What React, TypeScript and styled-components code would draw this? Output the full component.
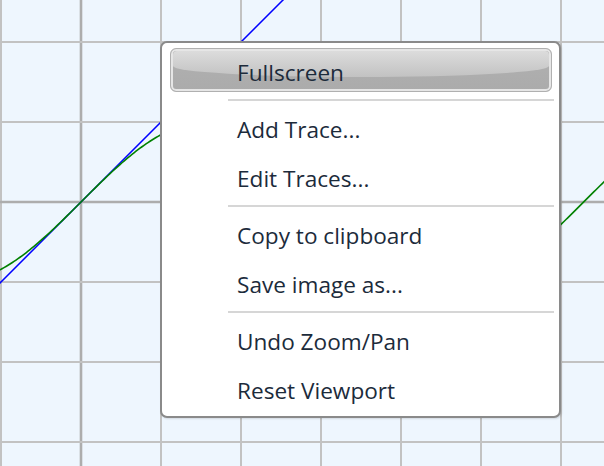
import * as React from 'react';
import styled, { createGlobalStyle } from 'styled-components';

const W = 604;
const H = 466;
const OX = 81;
const OY = 202;
const UNIT = 80;

const GlobalStyle = createGlobalStyle`
  html, body {
    margin: 0;
    padding: 0;
    background: #eef6fe;
  }
`;

function buildPath(fn: (x: number) => number) {
  const pts: string[] = [];
  for (let px = -2; px <= W + 2; px += 2) {
    const x = (px - OX) / UNIT;
    const py = OY - fn(x) * UNIT;
    pts.push(`${pts.length === 0 ? 'M' : 'L'}${px} ${py.toFixed(2)}`);
  }
  return pts.join(' ');
}

function Plot() {
  const xs: number[] = [];
  for (let x = OX - UNIT; x < W; x += UNIT) xs.push(x);
  const ys: number[] = [];
  for (let y = OY - 2 * UNIT; y < H; y += UNIT) ys.push(y);

  return (
    <Svg width={W} height={H} viewBox={`0 0 ${W} ${H}`}>
      {xs.map((x) => (
        <line
          key={`v${x}`}
          x1={x}
          x2={x}
          y1={0}
          y2={H}
          stroke={x === OX ? '#adadad' : '#c2c2c2'}
          strokeWidth={x === OX ? 2.6 : 2}
        />
      ))}
      {ys.map((y) => (
        <line
          key={`h${y}`}
          x1={0}
          x2={W}
          y1={y}
          y2={y}
          stroke={y === OY ? '#adadad' : '#c2c2c2'}
          strokeWidth={y === OY ? 2.6 : 2}
        />
      ))}
      <path d={buildPath((x) => x)} fill="none" stroke="#0000ff" strokeWidth={1.6} />
      <path d={buildPath(Math.sin)} fill="none" stroke="#008000" strokeWidth={1.6} />
    </Svg>
  );
}

const items: (string | null)[] = [
  'Fullscreen',
  null,
  'Add Trace...',
  'Edit Traces...',
  null,
  'Copy to clipboard',
  'Save image as...',
  null,
  'Undo Zoom/Pan',
  'Reset Viewport',
];

function ContextMenu() {
  const [hover, setHover] = React.useState('Fullscreen');
  return (
    <Menu>
      {items.map((label, i) =>
        label === null ? (
          <Separator key={`sep${i}`} />
        ) : (
          <Item
            key={label}
            $active={hover === label}
            onMouseEnter={() => setHover(label)}
          >
            <Label>{label}</Label>
          </Item>
        )
      )}
    </Menu>
  );
}

export default function App() {
  return (
    <>
      <GlobalStyle />
      <Canvas>
        <Plot />
        <ContextMenu />
      </Canvas>
    </>
  );
}

const Canvas = styled.div`
  position: relative;
  width: ${W}px;
  height: ${H}px;
  overflow: hidden;
  background: #eef6fe;
`;

const Svg = styled.svg`
  display: block;
`;

const Menu = styled.div`
  position: absolute;
  left: 160px;
  top: 41px;
  width: 401px;
  box-sizing: border-box;
  display: flex;
  flex-direction: column;
  padding: 5px 7px 6px 8px;
  background: #ffffff;
  border: 2px solid #8a8a8a;
  border-radius: 7px;
  box-shadow: 1px 1px 2px rgba(0, 0, 0, 0.12);
  font-family: 'Open Sans', 'Noto Sans', sans-serif;
  font-size: 22.6px;
  color: #1c2b3b;
`;

const Item = styled.div<{ $active?: boolean }>`
  position: relative;
  height: 44px;
  box-sizing: border-box;
  margin-bottom: 5px;
  padding: 3px 0 0 67px;
  line-height: 41px;
  border-radius: 6px;
  cursor: default;
  border: 1px solid ${(p) => (p.$active ? '#b0b0b0' : 'transparent')};
  background: ${(p) =>
    p.$active ? 'linear-gradient(to bottom, #b1b1b1, #ababab)' : 'transparent'};
  box-shadow: ${(p) => (p.$active ? 'inset 0 0 0 2px #e6e6e6' : 'none')};

  &:last-child {
    margin-bottom: 0;
  }

  &::before {
    content: '';
    display: ${(p) => (p.$active ? 'block' : 'none')};
    position: absolute;
    left: 2px;
    right: 2px;
    top: 2px;
    height: 26px;
    background: linear-gradient(to bottom, #dcdcdc, #c2c2c2);
    border-radius: 4px 4px 50% 50% / 4px 4px 11px 11px;
  }
`;

const Label = styled.span`
  position: relative;
  white-space: nowrap;
  margin-left: -1px;
`;

const Separator = styled.div`
  height: 2px;
  margin: 2px -2px 4px 58px;
  background: #d6d6d6;
`;
